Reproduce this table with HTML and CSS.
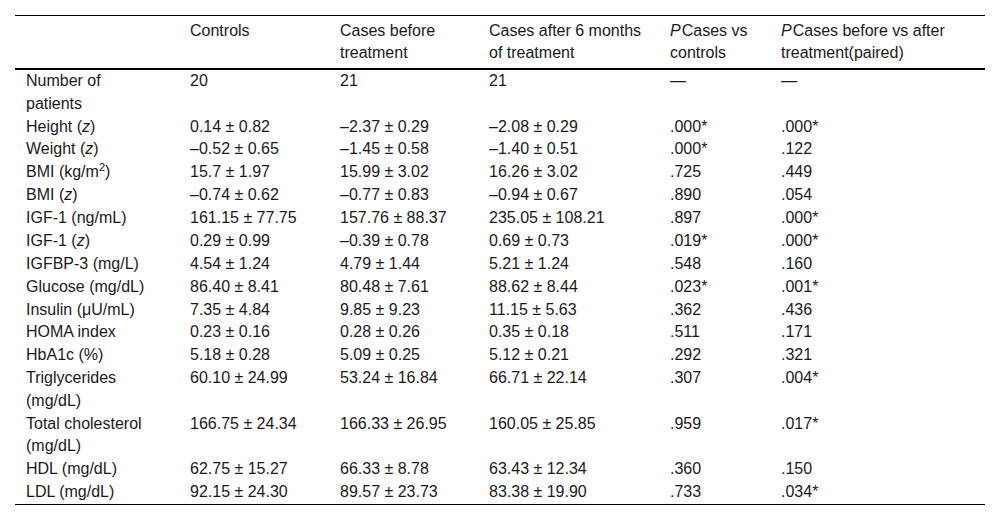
FILE: index.html
```html
<!DOCTYPE html>
<html lang="en">
<head>
<meta charset="utf-8">
<title>Table</title>
<link rel="stylesheet" href="styles.css">
</head>
<body>
<div class="wrap">
<table class="data">
<colgroup>
<col class="c1"><col class="c2"><col class="c3"><col class="c4"><col class="c5"><col class="c6">
</colgroup>
<thead>
<tr>
<th class="label"></th>
<th>Controls</th>
<th>Cases before treatment</th>
<th>Cases after 6 months of treatment</th>
<th><i class="pi">P</i>Cases vs controls</th>
<th><i class="pi">P</i>Cases before vs after treatment(paired)</th>
</tr>
</thead>
<tbody>
<tr><td class="label">Number of patients</td><td>20</td><td>21</td><td>21</td><td>—</td><td>—</td></tr>
<tr><td class="label">Height (<i>z</i>)</td><td>0.14 ± 0.82</td><td>–2.37 ± 0.29</td><td>–2.08 ± 0.29</td><td>.000*</td><td>.000*</td></tr>
<tr><td class="label">Weight (<i>z</i>)</td><td>–0.52 ± 0.65</td><td>–1.45 ± 0.58</td><td>–1.40 ± 0.51</td><td>.000*</td><td>.122</td></tr>
<tr><td class="label">BMI (kg/m<sup>2</sup>)</td><td>15.7 ± 1.97</td><td>15.99 ± 3.02</td><td>16.26 ± 3.02</td><td>.725</td><td>.449</td></tr>
<tr><td class="label">BMI (<i>z</i>)</td><td>–0.74 ± 0.62</td><td>–0.77 ± 0.83</td><td>–0.94 ± 0.67</td><td>.890</td><td>.054</td></tr>
<tr><td class="label">IGF-1 (ng/mL)</td><td>161.15 ± 77.75</td><td>157.76 ± 88.37</td><td>235.05 ± 108.21</td><td>.897</td><td>.000*</td></tr>
<tr><td class="label">IGF-1 (<i>z</i>)</td><td>0.29 ± 0.99</td><td>–0.39 ± 0.78</td><td>0.69 ± 0.73</td><td>.019*</td><td>.000*</td></tr>
<tr><td class="label">IGFBP-3 (mg/L)</td><td>4.54 ± 1.24</td><td>4.79 ± 1.44</td><td>5.21 ± 1.24</td><td>.548</td><td>.160</td></tr>
<tr><td class="label">Glucose (mg/dL)</td><td>86.40 ± 8.41</td><td>80.48 ± 7.61</td><td>88.62 ± 8.44</td><td>.023*</td><td>.001*</td></tr>
<tr><td class="label">Insulin (μU/mL)</td><td>7.35 ± 4.84</td><td>9.85 ± 9.23</td><td>11.15 ± 5.63</td><td>.362</td><td>.436</td></tr>
<tr><td class="label">HOMA index</td><td>0.23 ± 0.16</td><td>0.28 ± 0.26</td><td>0.35 ± 0.18</td><td>.511</td><td>.171</td></tr>
<tr><td class="label">HbA1c (%)</td><td>5.18 ± 0.28</td><td>5.09 ± 0.25</td><td>5.12 ± 0.21</td><td>.292</td><td>.321</td></tr>
<tr><td class="label">Triglycerides (mg/dL)</td><td>60.10 ± 24.99</td><td>53.24 ± 16.84</td><td>66.71 ± 22.14</td><td>.307</td><td>.004*</td></tr>
<tr><td class="label">Total cholesterol (mg/dL)</td><td>166.75 ± 24.34</td><td>166.33 ± 26.95</td><td>160.05 ± 25.85</td><td>.959</td><td>.017*</td></tr>
<tr><td class="label">HDL (mg/dL)</td><td>62.75 ± 15.27</td><td>66.33 ± 8.78</td><td>63.43 ± 12.34</td><td>.360</td><td>.150</td></tr>
<tr><td class="label">LDL (mg/dL)</td><td>92.15 ± 24.30</td><td>89.57 ± 23.73</td><td>83.38 ± 19.90</td><td>.733</td><td>.034*</td></tr>
</tbody>
</table>
</div>
</body>
</html>
```
FILE: styles.css
```css
html, body {
  margin: 0;
  padding: 0;
  background: #fff;
}
.wrap {
  padding: 15px 15px 0 15px;
}
.data {
  width: 970px;
  table-layout: fixed;
  border-collapse: collapse;
  font-family: "Liberation Sans", Arial, sans-serif;
  font-size: 16px;
  color: #1a1a1a;
  border-top: 1px solid #000;
  border-bottom: 1px solid #000;
}
.c1 { width: 164px; }
.c2 { width: 150px; }
.c3 { width: 149px; }
.c4 { width: 181px; }
.c5 { width: 111px; }
.c6 { width: 215px; }
.data th {
  font-weight: normal;
  text-align: left;
  vertical-align: top;
  line-height: 22px;
  padding: 4px 14px 4px 11px;
}
.data thead tr {
  border-bottom: 2px solid #000;
}
.data td {
  text-align: left;
  vertical-align: top;
  line-height: 22.5px;
  padding: 0.2px 14px 0.2px 11px;
}
.data .label {
  padding-right: 30px;
}
.pi {
  padding-right: 1px;
}
.data sup {
  font-size: 11px;
  line-height: 0;
  vertical-align: 6px;
}
```
